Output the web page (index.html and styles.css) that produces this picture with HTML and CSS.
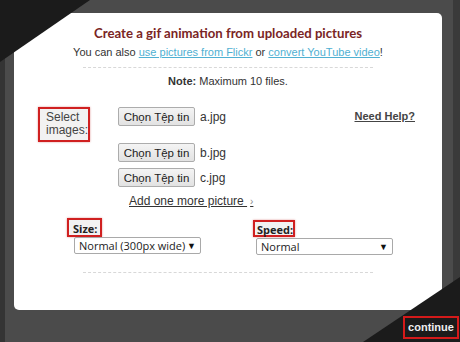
FILE: index.html
```html
<!DOCTYPE html>
<html lang="en">
<head>
    <meta charset="UTF-8">
    <title>Create a gif animation</title>
    <link rel="stylesheet" href="styles.css">
</head>
<body>
    <div class="corner corner-top"></div>
    <div class="corner corner-bottom"></div>

    <div class="panel">
        <h1 class="title">Create a gif animation from uploaded pictures</h1>
        <p class="intro">You can also <a href="#">use pictures from Flickr</a> or <a href="#">convert YouTube video</a>!</p>
        <hr class="dots">
        <p class="note"><strong>Note:</strong> Maximum 10 files.</p>

        <div class="upload">
            <div class="mark select-label">Select<br>images:</div>
            <div class="files">
                <div class="file-row first"><button class="file-btn">Chọn Tệp tin</button><span class="file-name">a.jpg</span></div>
                <div class="file-row"><button class="file-btn">Chọn Tệp tin</button><span class="file-name">b.jpg</span></div>
                <div class="file-row"><button class="file-btn">Chọn Tệp tin</button><span class="file-name">c.jpg</span></div>
                <a class="add-more" href="#">Add one more picture <span class="arrow">›</span></a>
            </div>
            <a class="help" href="#">Need Help?</a>
        </div>

        <div class="options">
            <div class="option size">
                <span class="mark">Size:</span>
                <div class="select"><span>Normal (300px wide)</span><span class="caret">▼</span></div>
            </div>
            <div class="option speed">
                <span class="mark">Speed:</span>
                <div class="select"><span>Normal</span><span class="caret">▼</span></div>
            </div>
        </div>
        <hr class="dots bottom">
    </div>

    <div class="footer">
        <a class="continue" href="#">continue</a>
    </div>
</body>
</html>
```

FILE: styles.css
```css
html, body {
    height: 100%;
}
body {
    margin: 0;
    position: relative;
    overflow: hidden;
    background-color: #4b4b4b;
    box-shadow: inset 5px 0 0 #343434, inset -7px 0 0 #3a3a3a;
    font-family: "Liberation Sans", Arial, sans-serif;
    color: #333;
}
.corner {
    position: absolute;
    background-color: #1b1b1b;
    z-index: 2;
}
.corner-top {
    left: 0;
    top: 0;
    width: 90px;
    height: 62px;
    clip-path: polygon(0 0, 100% 0, 0 100%);
}
.corner-bottom {
    right: 0;
    bottom: 0;
    width: 97px;
    height: 65px;
    clip-path: polygon(100% 0, 100% 100%, 0 100%);
}
.panel {
    margin: 13px 18px 0 14px;
    height: 297px;
    box-sizing: border-box;
    padding-top: 11px;
    background-color: #fff;
    border-radius: 5px;
}
.title {
    margin: 0;
    font-family: Lato, "Open Sans", sans-serif;
    font-size: 13.2px;
    line-height: 18px;
    font-weight: bold;
    color: #7a2525;
    text-align: center;
}
.intro {
    margin: 3px 0 0;
    font-size: 11px;
    line-height: 15px;
    text-align: center;
    color: #333;
}
.intro a {
    color: #4fb0d2;
}
.dots {
    width: 290px;
    margin: 7px auto 0;
    border: 0;
    border-top: 1px dashed #d8d8d8;
}
.dots.bottom {
    margin-top: 17px;
}
.note {
    margin: 6px 0 0;
    font-size: 11px;
    line-height: 14px;
    text-align: center;
}
.upload {
    display: flex;
    align-items: flex-start;
    margin-top: 19px;
    padding: 0 27px 0 24px;
}
.mark {
    display: inline-block;
    box-sizing: border-box;
    border: 2px solid #d02020;
    background-color: #f2f2f2;
    box-shadow: 0 0 2px rgba(180, 0, 0, 0.4);
    color: #444;
}
.select-label {
    width: 52px;
    height: 35px;
    padding: 2px 0 0 6px;
    font-size: 12px;
    line-height: 13px;
}
.files {
    display: flex;
    flex-direction: column;
    align-items: flex-start;
    gap: 6px;
    margin-left: 28px;
}
.file-row {
    display: flex;
    align-items: center;
    gap: 5px;
}
.file-row.first {
    margin-bottom: 11px;
}
.file-btn {
    width: 77px;
    height: 19px;
    padding: 0;
    border: 1px solid #acacac;
    border-radius: 2px;
    background: linear-gradient(#f4f4f4, #e2e2e2);
    font-family: "Liberation Sans", Arial, sans-serif;
    font-size: 11.5px;
    color: #222;
}
.file-name {
    font-size: 12px;
    color: #333;
}
.add-more {
    margin: 1px 0 0 11px;
    font-size: 12px;
    line-height: 14px;
    color: #333;
}
.arrow {
    font-size: 10px;
    color: #888;
    padding-left: 3px;
}
.help {
    margin: 3px 0 0 auto;
    font-size: 11px;
    font-weight: bold;
    color: #444;
}
.options {
    display: grid;
    grid-template-columns: 186px auto;
    margin-top: 9px;
    padding-left: 53px;
}
.option {
    display: flex;
    flex-direction: column;
    align-items: flex-start;
    font-family: "Open Sans", sans-serif;
}
.option .mark {
    font-size: 11px;
    font-weight: bold;
    line-height: 14px;
    padding: 1px 2px 0;
    color: #222;
}
.size .mark {
    width: 35px;
    height: 19px;
    padding: 2px 0 0 4px;
}
.speed {
    padding-top: 2px;
}
.speed .mark {
    width: 42px;
    height: 17px;
}
.select {
    display: flex;
    align-items: center;
    justify-content: space-between;
    box-sizing: border-box;
    height: 17px;
    padding: 0 4px 0 4px;
    border: 1px solid #a9a9a9;
    border-radius: 2px;
    font-size: 11px;
    color: #222;
}
.size .select {
    width: 127px;
    margin-left: 7px;
}
.speed .select {
    width: 137px;
    margin: 1px 0 0 3px;
}
.caret {
    font-size: 9px;
    color: #111;
}
.footer {
    display: flex;
    justify-content: flex-end;
    margin-top: 6px;
    padding-right: 1px;
}
.continue {
    position: relative;
    z-index: 3;
    box-sizing: border-box;
    width: 56px;
    height: 23px;
    padding-top: 2px;
    border: 2px solid #d41a1a;
    background-color: #1b1b1b;
    color: #eee;
    font-size: 11px;
    font-weight: bold;
    line-height: 15px;
    text-align: center;
    text-decoration: none;
}
```
